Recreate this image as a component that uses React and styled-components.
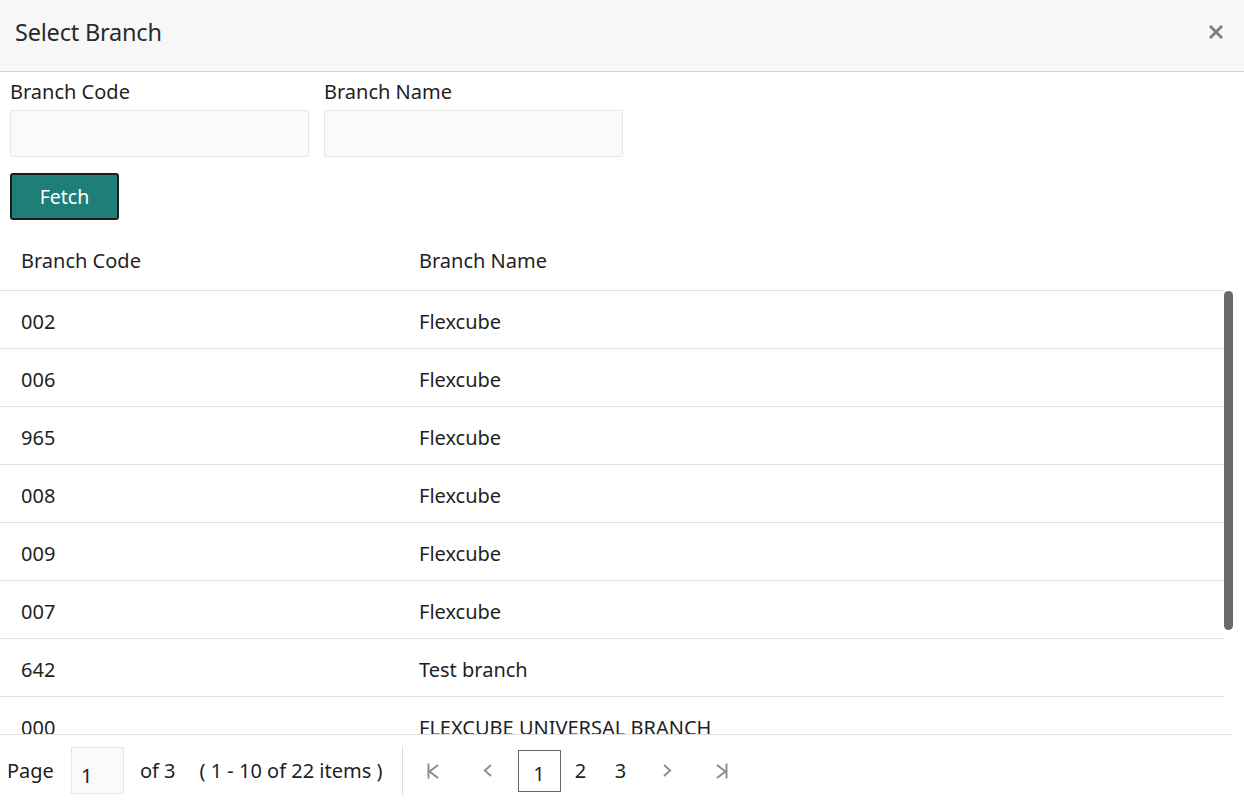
import React from "react";
import styled, { createGlobalStyle } from "styled-components";

const GlobalStyle = createGlobalStyle`
  html, body {
    margin: 0;
    padding: 0;
    background: #fff;
  }
  body {
    font-family: "Noto Sans", "Open Sans", sans-serif;
    color: #1f1f1f;
  }
`;

const Dialog = styled.div`
  width: 1244px;
  height: 806px;
  display: flex;
  flex-direction: column;
  overflow: hidden;
  background: #fff;
`;

const Header = styled.header`
  height: 72px;
  flex: none;
  display: flex;
  align-items: center;
  justify-content: space-between;
  padding: 0 18px 8px 15px;
  background: #f7f7f7;
  border-bottom: 1px solid #d3d3d3;
  box-sizing: border-box;
`;

const Title = styled.h1`
  margin: 0;
  font-size: 23.5px;
  font-weight: 400;
  color: #2a2a2a;
  letter-spacing: -0.2px;
`;

const CloseButton = styled.button`
  border: 0;
  background: none;
  padding: 0;
  width: 20px;
  height: 20px;
  display: grid;
  place-items: center;
  cursor: pointer;
`;

const Form = styled.div`
  padding: 8px 10px 0;
  display: flex;
  flex-direction: column;
  flex: none;
`;

const Fields = styled.div`
  display: flex;
  gap: 15px;
`;

const Field = styled.label`
  display: flex;
  flex-direction: column;
  gap: 6px;
  width: 299px;
`;

const Label = styled.span`
  font-size: 20px;
  line-height: 24px;
  color: #1f1f1f;
`;

const Input = styled.input`
  height: 47px;
  box-sizing: border-box;
  border: 1px solid #e6e6e6;
  border-radius: 2px;
  background: #fafafa;
  font: inherit;
  font-size: 20px;
  padding: 0 10px;
  outline: none;
`;

const FetchButton = styled.button`
  margin-top: 16px;
  width: 109px;
  height: 47px;
  border: 2px solid #1c1c1c;
  border-radius: 3px;
  background: #1e7f78;
  color: #fff;
  font-family: inherit;
  font-size: 19.5px;
  cursor: pointer;
`;

const Grid = styled.div`
  margin-top: 12px;
  margin-right: 11px;
  display: flex;
  flex-direction: column;
  flex: 1;
  min-height: 0;
`;

const HeadRow = styled.div`
  display: grid;
  grid-template-columns: 398px 1fr;
  height: 58px;
  align-items: center;
  border-bottom: 1px solid #e0e0e0;
  margin-right: 9px;
  flex: none;
`;

const HeadCell = styled.div`
  padding-left: 21px;
  font-size: 20px;
  color: #1f1f1f;
  margin-top: -2px;
`;

const Body = styled.div`
  flex: 1;
  min-height: 0;
  display: flex;
  overflow: hidden;
`;

const RowList = styled.div`
  flex: 1;
  min-width: 0;
`;

const ScrollTrack = styled.div`
  width: 9px;
  flex: none;
`;

const ScrollThumb = styled.div`
  height: 339px;
  border-radius: 5px;
  background: #6b6869;
`;

const Row = styled.div`
  display: grid;
  grid-template-columns: 398px 1fr;
  height: 58px;
  box-sizing: border-box;
  align-items: center;
  border-bottom: 1px solid #e0e0e0;
  padding-top: 3px;
`;

const Cell = styled.div`
  padding-left: 21px;
  font-size: 20px;
  color: #1f1f1f;
  white-space: nowrap;
`;

const Footer = styled.footer`
  height: 72px;
  flex: none;
  border-top: 1px solid #e0e0e0;
  box-sizing: border-box;
  display: flex;
  align-items: center;
  padding-left: 7px;
  font-size: 20px;
  color: #1f1f1f;
`;

const PageInput = styled.input`
  width: 53px;
  height: 47px;
  box-sizing: border-box;
  margin: 0 16px 0 17px;
  border: 1px solid #e6e6e6;
  background: #fafafa;
  font: inherit;
  font-size: 20px;
  padding: 10px 0 0 9px;
  color: #1f1f1f;
  outline: none;
`;

const Info = styled.span`
  margin-right: ${({ $gap }) => $gap || 0}px;
`;

const Divider = styled.span`
  width: 1px;
  height: 49px;
  background: #dcdcdc;
  margin: 0 5px 0 19px;
`;

const Pager = styled.nav`
  display: flex;
  align-items: center;
`;

const NavButton = styled.button`
  border: 0;
  background: none;
  width: ${({ $w }) => $w}px;
  height: 42px;
  display: grid;
  place-items: center;
  padding: 0;
  cursor: pointer;
`;

const PageButton = styled.button`
  width: ${({ $current }) => ($current ? 43 : 40)}px;
  height: 42px;
  box-sizing: border-box;
  border: 1px solid ${({ $current }) => ($current ? "#666" : "transparent")};
  background: none;
  font-family: inherit;
  font-size: 20px;
  color: #1f1f1f;
  padding: ${({ $current }) => ($current ? "5px 0 0" : "0")};
  cursor: pointer;
`;

const rows = [
  ["002", "Flexcube"],
  ["006", "Flexcube"],
  ["965", "Flexcube"],
  ["008", "Flexcube"],
  ["009", "Flexcube"],
  ["007", "Flexcube"],
  ["642", "Test branch"],
  ["000", "FLEXCUBE UNIVERSAL BRANCH"],
  ["001", "Flexcube"],
  ["003", "Flexcube"],
];

const EdgeIcon = ({ flip }) => (
  <svg
    width="12"
    height="16"
    viewBox="0 0 12 16"
    fill="none"
    stroke="#8a8a8a"
    strokeWidth="1.9"
    style={flip ? { transform: "scaleX(-1)" } : undefined}
  >
    <line x1="1.5" y1="0.5" x2="1.5" y2="15.5" />
    <polyline points="11,2 2.5,8.5 11,15" />
  </svg>
);

const ChevronIcon = ({ flip }) => (
  <svg
    width="9"
    height="13"
    viewBox="0 0 9 13"
    fill="none"
    stroke="#8a8a8a"
    strokeWidth="1.8"
    style={flip ? { transform: "scaleX(-1)" } : undefined}
  >
    <polyline points="8,1 1.8,6.5 8,12" />
  </svg>
);

export default function App() {
  return (
    <>
      <GlobalStyle />
      <Dialog>
        <Header>
          <Title>Select Branch</Title>
          <CloseButton aria-label="Close">
            <svg width="14" height="14" viewBox="0 0 14 14" stroke="#808080" strokeWidth="3" strokeLinecap="square">
              <line x1="2" y1="2" x2="12" y2="12" />
              <line x1="12" y1="2" x2="2" y2="12" />
            </svg>
          </CloseButton>
        </Header>

        <Form>
          <Fields>
            <Field>
              <Label>Branch Code</Label>
              <Input />
            </Field>
            <Field>
              <Label>Branch Name</Label>
              <Input />
            </Field>
          </Fields>
          <FetchButton>Fetch</FetchButton>
        </Form>

        <Grid>
          <HeadRow>
            <HeadCell>Branch Code</HeadCell>
            <HeadCell>Branch Name</HeadCell>
          </HeadRow>
          <Body>
            <RowList>
              {rows.map(([code, name]) => (
                <Row key={code}>
                  <Cell>{code}</Cell>
                  <Cell>{name}</Cell>
                </Row>
              ))}
            </RowList>
            <ScrollTrack>
              <ScrollThumb />
            </ScrollTrack>
          </Body>
          <Footer>
            <span>Page</span>
            <PageInput defaultValue="1" />
            <Info $gap={24}>of 3</Info>
            <Info>( 1 - 10 of 22 items )</Info>
            <Divider />
            <Pager>
              <NavButton $w={50} aria-label="First page">
                <EdgeIcon />
              </NavButton>
              <NavButton $w={60} aria-label="Previous page">
                <ChevronIcon />
              </NavButton>
              <PageButton $current>1</PageButton>
              <PageButton>2</PageButton>
              <PageButton>3</PageButton>
              <NavButton $w={54} aria-label="Next page">
                <ChevronIcon flip />
              </NavButton>
              <NavButton $w={54} aria-label="Last page">
                <EdgeIcon flip />
              </NavButton>
            </Pager>
          </Footer>
        </Grid>
      </Dialog>
    </>
  );
}
